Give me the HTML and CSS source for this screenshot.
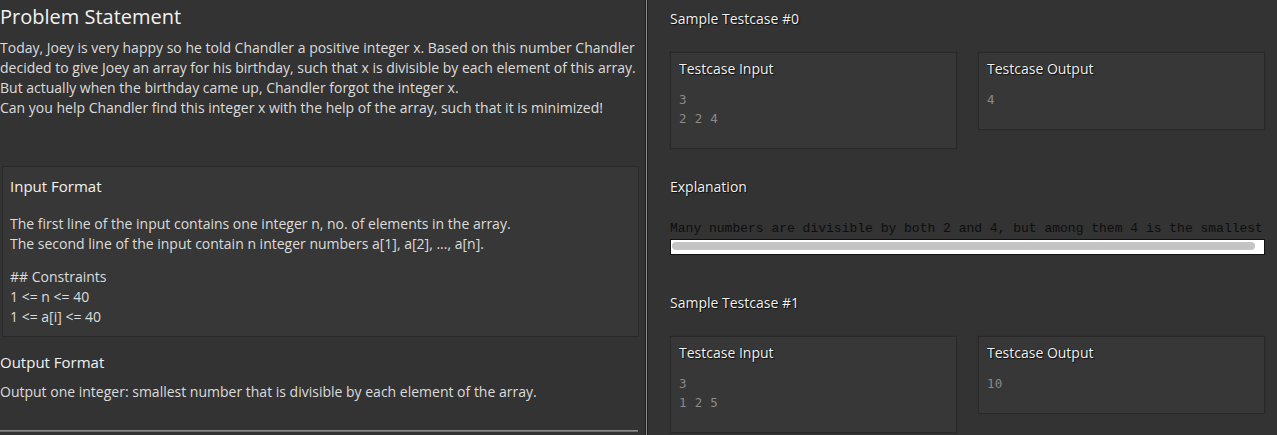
FILE: index.html
```html
<!DOCTYPE html>
<html>
<head>
<meta charset="utf-8">
<link rel="stylesheet" href="styles.css">
</head>
<body>
<div class="page">
  <section class="left">
    <h1 class="title">Problem Statement</h1>
    <p class="para">Today, Joey is very happy so he told Chandler a positive integer x. Based on this number Chandler<br>decided to give Joey an array for his birthday, such that x is divisible by each element of this array.<br>But actually when the birthday came up, Chandler forgot the integer x.<br>Can you help Chandler find this integer x with the help of the array, such that it is minimized!</p>
    <div class="inbox">
      <h2 class="sub">Input Format</h2>
      <p class="para gap1">The first line of the input contains one integer n, no. of elements in the array.<br>The second line of the input contain n integer numbers a[1], a[2], ..., a[n].</p>
      <p class="para gap2">## Constraints<br>1 &lt;= n &lt;= 40<br>1 &lt;= a[i] &lt;= 40</p>
    </div>
    <h2 class="sub out-h">Output Format</h2>
    <p class="para out-p">Output one integer: smallest number that is divisible by each element of the array.</p>
    <div class="rule"></div>
  </section>
  <div class="divider"><span class="d1"></span><span class="d2"></span><span class="d3"></span></div>
  <section class="right">
    <h3 class="rh">Sample Testcase #0</h3>
    <div class="cases">
      <div class="case in">
        <h4 class="ch">Testcase Input</h4>
        <pre class="mono">3
2 2 4</pre>
      </div>
      <div class="case">
        <h4 class="ch">Testcase Output</h4>
        <pre class="mono">4</pre>
      </div>
    </div>
    <h3 class="rh expl-h">Explanation</h3>
    <div class="expl">Many numbers are divisible by both 2 and 4, but among them 4 is the smallest</div>
    <div class="scroll"><div class="thumb"></div></div>
    <h3 class="rh s1">Sample Testcase #1</h3>
    <div class="cases">
      <div class="case in">
        <h4 class="ch">Testcase Input</h4>
        <pre class="mono">3
1 2 5</pre>
      </div>
      <div class="case">
        <h4 class="ch">Testcase Output</h4>
        <pre class="mono">10</pre>
      </div>
    </div>
  </section>
</div>
</body>
</html>
```
FILE: styles.css
```css
* { box-sizing: border-box; }
html, body {
  margin: 0;
  padding: 0;
  background: #333333;
  height: 100%;
  overflow: hidden;
}
body {
  font-family: "Open Sans", "Noto Sans", sans-serif;
  color: #dcdcdc;
}
.page {
  display: flex;
  height: 435px;
}
.left {
  width: 640px;
  margin-right: 5px;
  flex: none;
}
.title {
  margin: 3px 0 0;
  font-size: 20px;
  line-height: 28px;
  font-weight: 400;
  color: #f2f2f2;
}
.para {
  margin: 7px 0 0;
  font-size: 14px;
  line-height: 20px;
  white-space: nowrap;
}
.inbox {
  margin: 48px 1px 0 2px;
  background: #373737;
  border: 1px solid #292929;
  padding: 9px 7px 9px;
}
.sub {
  margin: 0;
  font-size: 15px;
  line-height: 20px;
  font-weight: 400;
  color: #f2f2f2;
}
.gap1 { margin-top: 18px; }
.gap2 { margin-top: 13px; }
.out-h { margin-top: 15px; }
.out-p { margin-top: 10px; }
.rule {
  margin-top: 28px;
  height: 2px;
  width: 638px;
  background: #6e6e6e;
  border-top: 1px solid #8a8a8a;
}
.divider {
  display: flex;
  flex: none;
}
.d1, .d3 { width: 1px; background: #1f1f1f; }
.d2 { width: 1px; background: #8c8c8c; }
.right {
  flex: 1;
  padding: 0 12px 0 22px;
}
.rh {
  margin: 9px 0 0;
  font-size: 14px;
  line-height: 20px;
  font-weight: 400;
  color: #f4f4f4;
  text-shadow: 0 0 1px #000, 1px 1px 1px #111;
}
.cases {
  display: flex;
  gap: 21px;
  margin-top: 23px;
  align-items: flex-start;
}
.case {
  flex: 1;
  background: #373737;
  border: 1px solid #292929;
  padding: 6px 8px 20px;
  box-shadow: 0 0 1px #262626;
}
.ch {
  margin: 0;
  font-size: 14px;
  line-height: 20px;
  font-weight: 400;
  color: #f4f4f4;
  text-shadow: 0 0 1px #000, 1px 1px 1px #111;
}
.mono {
  margin: 11px 0 0;
  font-family: "DejaVu Sans Mono", monospace;
  font-size: 12.5px;
  line-height: 19px;
  color: #8a8a8a;
  letter-spacing: 0.3px;
}
.expl-h { margin-top: 28px; }
.expl {
  margin-top: 24px;
  font-family: "Liberation Mono", "Courier New", monospace;
  font-size: 13px;
  line-height: 15px;
  color: #0e0e0e;
  white-space: nowrap;
}
.scroll {
  margin-top: 3px;
  height: 16px;
  background: #ffffff;
  border: 1px solid #111;
  padding: 2px 9px 0 1px;
}
.thumb {
  height: 8px;
  border-radius: 4px;
  background: #c4c4c4;
}
.s1 { margin-top: 38px; }
```
